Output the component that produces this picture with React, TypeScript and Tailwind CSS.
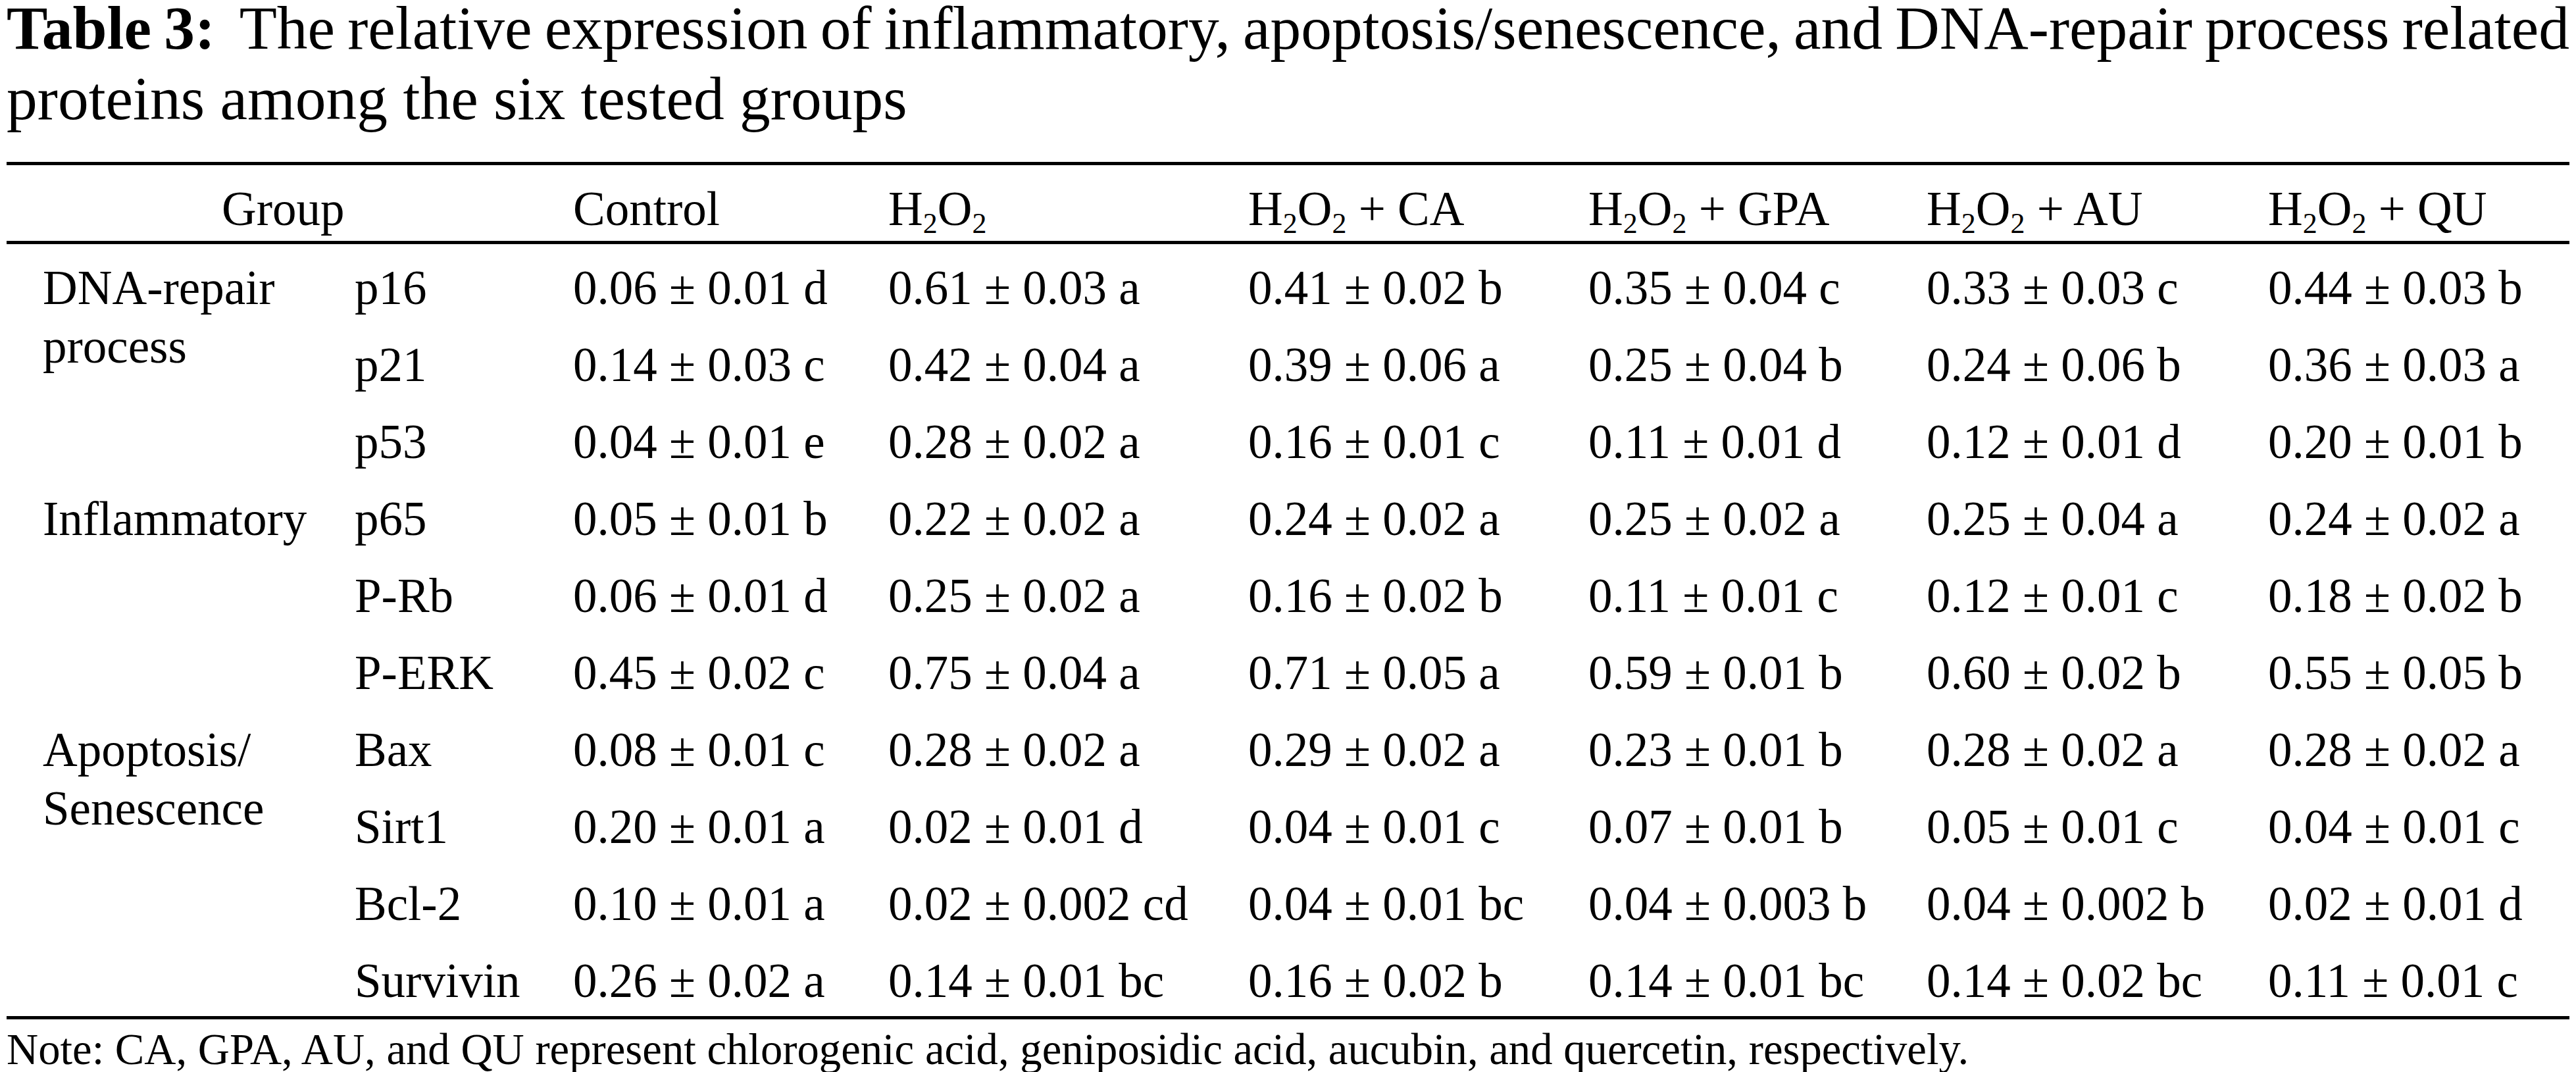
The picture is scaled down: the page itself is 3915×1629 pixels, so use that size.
import React from "react";

type Row = { label: string; values: string[] };

const groups: { name: string[]; rows: Row[] }[] = [
  {
    name: ["DNA-repair", "process"],
    rows: [
      { label: "p16", values: ["0.06 ± 0.01 d", "0.61 ± 0.03 a", "0.41 ± 0.02 b", "0.35 ± 0.04 c", "0.33 ± 0.03 c", "0.44 ± 0.03 b"] },
      { label: "p21", values: ["0.14 ± 0.03 c", "0.42 ± 0.04 a", "0.39 ± 0.06 a", "0.25 ± 0.04 b", "0.24 ± 0.06 b", "0.36 ± 0.03 a"] },
      { label: "p53", values: ["0.04 ± 0.01 e", "0.28 ± 0.02 a", "0.16 ± 0.01 c", "0.11 ± 0.01 d", "0.12 ± 0.01 d", "0.20 ± 0.01 b"] },
    ],
  },
  {
    name: ["Inflammatory"],
    rows: [
      { label: "p65", values: ["0.05 ± 0.01 b", "0.22 ± 0.02 a", "0.24 ± 0.02 a", "0.25 ± 0.02 a", "0.25 ± 0.04 a", "0.24 ± 0.02 a"] },
      { label: "P-Rb", values: ["0.06 ± 0.01 d", "0.25 ± 0.02 a", "0.16 ± 0.02 b", "0.11 ± 0.01 c", "0.12 ± 0.01 c", "0.18 ± 0.02 b"] },
      { label: "P-ERK", values: ["0.45 ± 0.02 c", "0.75 ± 0.04 a", "0.71 ± 0.05 a", "0.59 ± 0.01 b", "0.60 ± 0.02 b", "0.55 ± 0.05 b"] },
    ],
  },
  {
    name: ["Apoptosis/", "Senescence"],
    rows: [
      { label: "Bax", values: ["0.08 ± 0.01 c", "0.28 ± 0.02 a", "0.29 ± 0.02 a", "0.23 ± 0.01 b", "0.28 ± 0.02 a", "0.28 ± 0.02 a"] },
      { label: "Sirt1", values: ["0.20 ± 0.01 a", "0.02 ± 0.01 d", "0.04 ± 0.01 c", "0.07 ± 0.01 b", "0.05 ± 0.01 c", "0.04 ± 0.01 c"] },
      { label: "Bcl-2", values: ["0.10 ± 0.01 a", "0.02 ± 0.002 cd", "0.04 ± 0.01 bc", "0.04 ± 0.003 b", "0.04 ± 0.002 b", "0.02 ± 0.01 d"] },
      { label: "Survivin", values: ["0.26 ± 0.02 a", "0.14 ± 0.01 bc", "0.16 ± 0.02 b", "0.14 ± 0.01 bc", "0.14 ± 0.02 bc", "0.11 ± 0.01 c"] },
    ],
  },
];

const rowSpan: Record<number, string> = {
  1: "row-span-1",
  3: "row-span-3",
  4: "row-span-4",
};

function H2O2({ suffix }: { suffix?: string }) {
  return (
    <span>
      H<span className="relative top-[12px] text-[44px] leading-none">2</span>O
      <span className="relative top-[12px] text-[44px] leading-none">2</span>
      {suffix ? ` + ${suffix}` : ""}
    </span>
  );
}

const cols = "grid grid-cols-[529px_332px_479px_547px_517px_514px_519px_458px]";

export default function App() {
  return (
    <div className="w-[3915px] h-[1629px] overflow-hidden bg-white pl-[10px] text-black font-['Liberation_Serif',serif]">
      <div className="w-[3895px] pt-[1px] text-[93.5px] leading-[107px]">
        <div className="-mt-[12px] whitespace-nowrap [word-spacing:-7px] [text-align-last:justify]">
          <b>Table 3:</b>&nbsp; The relative expression of inflammatory, apoptosis/senescence, and DNA-repair process
          related
        </div>
        <div>proteins among the six tested groups</div>
      </div>

      <div className="mt-[43px] w-[3895px] h-[5px] bg-black" />

      <div className={`${cols} h-[115px] text-[73px] leading-[81px] pt-[26px]`}>
        <div className="col-span-2 pl-[327px]">Group</div>
        <div>Control</div>
        <div>
          <H2O2 />
        </div>
        <div>
          <H2O2 suffix="CA" />
        </div>
        <div>
          <H2O2 suffix="GPA" />
        </div>
        <div>
          <H2O2 suffix="AU" />
        </div>
        <div>
          <H2O2 suffix="QU" />
        </div>
      </div>

      <div className="w-[3895px] h-[5px] bg-black" />

      <div className={`${cols} auto-rows-[117px] text-[73px] whitespace-nowrap`}>
        {groups.map((g) => (
          <React.Fragment key={g.name[0]}>
            <div className={`${rowSpan[g.rows.length]} col-start-1 pl-[55px] pt-[22px] leading-[89px]`}>
              {g.name.map((n) => (
                <div key={n}>{n}</div>
              ))}
            </div>
            {g.rows.map((r) => (
              <React.Fragment key={r.label}>
                <div className="col-start-2 pt-[26px] leading-[81px]">{r.label}</div>
                {r.values.map((v, i) => (
                  <div key={i} className="pt-[26px] leading-[81px]">
                    {v}
                  </div>
                ))}
              </React.Fragment>
            ))}
          </React.Fragment>
        ))}
      </div>

      <div className="mt-[3px] w-[3895px] h-[5px] bg-black" />

      <div className="mt-[9px] text-[66.7px] leading-[73px] whitespace-nowrap">
        Note: CA, GPA, AU, and QU represent chlorogenic acid, geniposidic acid, aucubin, and quercetin, respectively.
      </div>
    </div>
  );
}
